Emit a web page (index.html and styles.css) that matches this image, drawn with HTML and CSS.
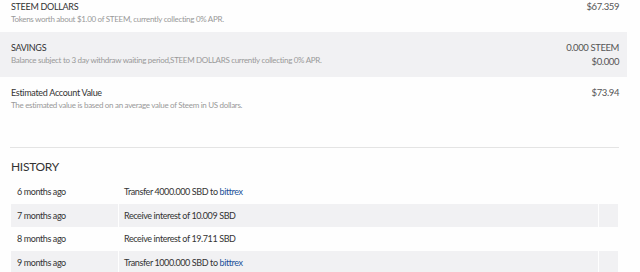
FILE: index.html
```html
<html>
	<head>
		<meta name="viewport" content="width=device-width, initial-scale=1">
		<meta charset=utf-8>
		<link rel="stylesheet" href="styles.css">
		<title>Wallet</title>
	</head>
	<body>
		<div class="wallet">
			<div class="row first">
				<div>
					<div class="ttl">STEEM DOLLARS</div>
					<div class="dsc">Tokens worth about $1.00 of STEEM, currently collecting 0% APR.</div>
				</div>
				<div class="val">$67.359</div>
			</div>
			<div class="row gr">
				<div>
					<div class="ttl">SAVINGS</div>
					<div class="dsc">Balance subject to 3 day withdraw waiting period,STEEM DOLLARS currently collecting 0% APR.</div>
				</div>
				<div class="val">
					<div>0.000 STEEM</div>
					<div>$0.000</div>
				</div>
			</div>
			<div class="row">
				<div>
					<div class="ttl">Estimated Account Value</div>
					<div class="dsc">The estimated value is based on an average value of Steem in US dollars.</div>
				</div>
				<div class="val">$73.94</div>
			</div>
			<hr>
			<h4>HISTORY</h4>
			<div class="hist">
				<div class="hrow">
					<div>6 months ago</div>
					<div>Transfer 4000.000 SBD to <a href="#">bittrex</a></div>
					<div></div>
				</div>
				<div class="hrow gr">
					<div>7 months ago</div>
					<div>Receive interest of 10.009 SBD</div>
					<div></div>
				</div>
				<div class="hrow">
					<div>8 months ago</div>
					<div>Receive interest of 19.711 SBD</div>
					<div></div>
				</div>
				<div class="hrow gr">
					<div>9 months ago</div>
					<div>Transfer 1000.000 SBD to <a href="#">bittrex</a></div>
					<div></div>
				</div>
			</div>
		</div>
	</body>
</html>
```

FILE: styles.css
```css
body{
	margin:0px;
	background:#fefefe;
	font-family:"Lato", sans-serif;
	color:#333;
	overflow:hidden;
}
.wallet{
	width:627px;
}
.row{
	display:flex;
	justify-content:space-between;
	padding:9px 8px 10px 11px;
	height:26px;
}
.row.first{
	padding-top:0px;
	height:22px;
}
.gr{
	background:#f1f1f3;
}
.ttl{
	font-size:9px;
	letter-spacing:-0.3px;
	line-height:13px;
	color:#333;
}
.dsc{
	font-size:8px;
	letter-spacing:-0.3px;
	line-height:13px;
	color:#999;
}
.val{
	font-size:9.5px;
	letter-spacing:-0.4px;
	line-height:14px;
	text-align:right;
	color:#555;
}
hr{
	border:0px;
	border-top:1px solid #e4e4e4;
	margin:25px 8px 0px 10px;
}
h4{
	font-weight:normal;
	font-size:12px;
	letter-spacing:-0.3px;
	line-height:16px;
	margin:11px 0px 0px 11px;
	color:#333;
}
.hist{
	margin:5px 0px 0px 11px;
}
.hrow{
	display:grid;
	grid-template-columns:107px 479px 19px;
	column-gap:1px;
	height:23.5px;
	font-size:9px;
	letter-spacing:-0.4px;
	line-height:23.5px;
}
.hrow.gr{
	background:none;
}
.hrow.gr div{
	background:#f1f1f3;
}
.hrow div:first-child{
	padding-left:6px;
}
.hrow div:nth-child(2){
	padding-left:5px;
}
a{
	color:#1a5099;
	text-decoration:none;
}
```
